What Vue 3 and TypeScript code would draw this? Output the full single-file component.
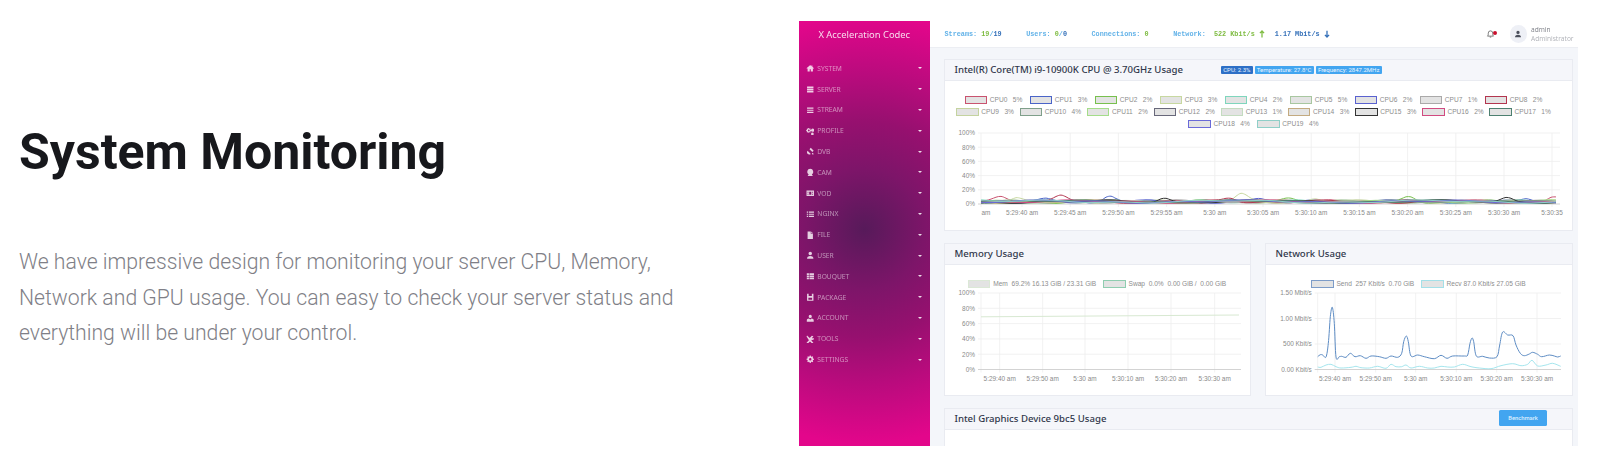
<script setup lang="ts">
type Pt = [number, number];

interface LegendItem {
  label: string;
  color: string;
}

interface Chart {
  // chart coordinates are measured on the page, the viewBox maps them back
  x: number;
  y: number;
  width: number;
  height: number;
  left: number;
  right: number;
  top: number;
  bottom: number;
  gridX: number[];
  gridY: number[];
  xLabels: { x: number; text: string }[];
  yLabels: string[];
  lines: { d: string; color: string; width: number }[];
}

interface Panel {
  title: string;
  wide: boolean;
  badges?: { text: string; dark?: boolean }[];
  button?: string;
  legend: LegendItem[][];
  chart?: Chart;
}

function smooth(pts: Pt[]): string {
  let d = `M${pts[0][0].toFixed(1)} ${pts[0][1].toFixed(1)}`;
  for (let i = 0; i < pts.length - 1; i++) {
    const p0 = pts[Math.max(i - 1, 0)];
    const p1 = pts[i];
    const p2 = pts[i + 1];
    const p3 = pts[Math.min(i + 2, pts.length - 1)];
    const c1x = p1[0] + (p2[0] - p0[0]) / 6;
    const c1y = p1[1] + (p2[1] - p0[1]) / 6;
    const c2x = p2[0] - (p3[0] - p1[0]) / 6;
    const c2y = p2[1] - (p3[1] - p1[1]) / 6;
    d += `C${c1x.toFixed(1)} ${c1y.toFixed(1)} ${c2x.toFixed(1)} ${c2y.toFixed(1)} ${p2[0].toFixed(1)} ${p2[1].toFixed(1)}`;
  }
  return d;
}

const cpuColors = [
  "#c9536f", "#4a64c8", "#78c04e", "#c7d8a0", "#7fd6bd",
  "#a8c7a0", "#5a62d0", "#aaa9a9", "#b3364f", "#c4d39f",
  "#7f9f8a", "#a4dd8a", "#68687a", "#c4dcc0", "#c3aa80",
  "#333333", "#d14a80", "#4d8070", "#6a6ad8", "#8fcfc8",
];
const cpuValues = [5, 3, 2, 3, 2, 5, 2, 1, 2, 3, 4, 2, 2, 1, 3, 3, 2, 1, 4, 4];

// where a core visibly spikes above the band: [x, height in %]
const cpuBumps: Record<number, Pt[]> = {
  0: [[1000, 6], [1552, 6]],
  8: [[1060, 7], [1229, 5]],
  3: [[1015, 7], [1240, 10], [1313, 6]],
  1: [[1045, 4], [1108, 8], [1526, 6]],
  15: [[1163, 6], [1506, 6]],
  2: [[1288, 3], [1408, 6]],
  6: [[1258, 4], [1440, 3]],
};

function cpuLine(i: number): string {
  const pts: Pt[] = [];
  for (let x = 980; x <= 1559; x += 5) {
    let v =
      3.4 +
      1.5 * Math.sin(x / (13 + i) + i * 1.7) +
      1 * Math.sin(x / (6 + i * 0.3) + i);
    for (const [bx, h] of cpuBumps[i] ?? []) {
      v += h * Math.exp(-((x - bx) ** 2) / 70);
    }
    pts.push([x, 204 - Math.max(v, 0.8) * 0.71]);
  }
  return smooth(pts);
}

const cpuLegend: LegendItem[] = cpuColors.map((color, i) => ({
  label: `CPU${i}   ${cpuValues[i]}%`,
  color,
}));

const cpuTimes = [
  "5:29:40 am", "5:29:45 am", "5:29:50 am", "5:29:55 am", "5:30 am", "5:30:05 am",
  "5:30:10 am", "5:30:15 am", "5:30:20 am", "5:30:25 am", "5:30:30 am",
];
const cpuGrid = cpuTimes.map((_, i) => 1021 + i * 48.2).concat(1551);
const shortTimes = ["5:29:40 am", "5:29:50 am", "5:30 am", "5:30:10 am", "5:30:20 am", "5:30:30 am"];
const percent = ["100%", "80%", "60%", "40%", "20%", "0%"];

function evenly(from: number, to: number, n: number): number[] {
  return Array.from({ length: n }, (_, i) => from + ((to - from) * i) / (n - 1));
}

const sendPts: Pt[] = ([
  [200, 380], [208, 374], [215, 375], [225, 381], [232, 340], [238, 260], [244, 232], [250, 280],
  [255, 381], [265, 380], [272, 379], [285, 382], [298, 370], [312, 380], [328, 377], [345, 385],
  [360, 378], [385, 380], [405, 385], [420, 378], [440, 382], [452, 370], [458, 335], [466, 318],
  [472, 335], [480, 378], [500, 375], [520, 380], [550, 386], [570, 376], [588, 385], [605, 378],
  [640, 378], [650, 375], [657, 340], [663, 324], [668, 335], [676, 378], [695, 379], [715, 384],
  [738, 380], [746, 345], [755, 306], [770, 315], [786, 317], [795, 345], [808, 370], [820, 377],
  [835, 372], [845, 367], [860, 373], [872, 380], [895, 375], [910, 378], [920, 381], [929, 378],
] as Pt[]).map(([x, y]) => [1250 + x / 3, 230 + y / 3]);

const recvPts: Pt[] = ([
  [200, 411], [210, 412], [225, 405], [240, 403], [255, 410], [270, 414], [300, 412], [315, 409],
  [330, 413], [355, 414], [380, 409], [405, 415], [420, 403], [435, 410], [452, 410], [465, 405],
  [480, 414], [505, 409], [530, 414], [550, 414], [570, 409], [590, 411], [610, 411], [635, 403],
  [660, 410], [685, 414], [720, 416], [750, 407], [785, 401], [810, 407], [830, 403], [843, 391],
  [860, 408], [885, 405], [905, 400], [929, 409],
] as Pt[]).map(([x, y]) => [1250 + x / 3, 230 + y / 3]);

const panels: Panel[] = [
  {
    title: "Intel(R) Core(TM) i9-10900K CPU @ 3.70GHz Usage",
    wide: true,
    badges: [
      { text: "CPU: 2.3%", dark: true },
      { text: "Temperature: 27.8°C" },
      { text: "Frequency: 2847.2MHz" },
    ],
    legend: [cpuLegend.slice(0, 9), cpuLegend.slice(9, 18), cpuLegend.slice(18)],
    chart: {
      x: 944,
      y: 130,
      width: 627,
      height: 100,
      left: 980,
      right: 1559,
      top: 133,
      bottom: 204,
      gridX: cpuGrid,
      gridY: evenly(133, 204, 6),
      xLabels: [
        { x: 985, text: "am" },
        ...cpuTimes.map((text, i) => ({ x: 1021 + i * 48.2, text })),
        { x: 1551, text: "5:30:35" },
      ],
      yLabels: percent,
      lines: cpuColors.map((color, i) => ({ d: cpuLine(i), color, width: 1 })),
    },
  },
  {
    title: "Memory Usage",
    wide: false,
    legend: [
      [
        { label: "Mem  69.2% 16.13 GiB / 23.31 GiB", color: "#dbe8d6" },
        { label: "Swap  0.0%  0.00 GiB /  0.00 GiB", color: "#8fcdb0" },
      ],
    ],
    chart: {
      x: 944,
      y: 290,
      width: 305,
      height: 105,
      left: 980,
      right: 1240,
      top: 293,
      bottom: 369.5,
      gridX: [998.7, 1041.7, 1084, 1127, 1170, 1213.7],
      gridY: evenly(293, 369.5, 6),
      xLabels: shortTimes.map((text, i) => ({ x: [998.7, 1041.7, 1084, 1127, 1170, 1213.7][i], text })),
      yLabels: percent,
      lines: [{ d: "M980 316.8L1238 315", color: "#d8e9d2", width: 1 }],
    },
  },
  {
    title: "Network Usage",
    wide: false,
    legend: [
      [
        { label: "Send  257 Kbit/s  0.70 GiB", color: "#7d9cc8" },
        { label: "Recv 87.0 Kbit/s 27.05 GiB", color: "#a3e0e8" },
      ],
    ],
    chart: {
      x: 1265,
      y: 290,
      width: 306,
      height: 105,
      left: 1316.7,
      right: 1560,
      top: 293,
      bottom: 369.5,
      gridX: [1334, 1374.7, 1414.7, 1455.3, 1495.7, 1536],
      gridY: evenly(293, 369.5, 4),
      xLabels: shortTimes.map((text, i) => ({ x: [1334, 1374.7, 1414.7, 1455.3, 1495.7, 1536][i], text })),
      yLabels: ["1.50 Mbit/s", "1.00 Mbit/s", "500 Kbit/s", "0.00 Kbit/s"],
      lines: [
        { d: smooth(recvPts), color: "#a5e6ee", width: 1 },
        { d: smooth(sendPts), color: "#5d8cc4", width: 1 },
      ],
    },
  },
  {
    title: "Intel Graphics Device 9bc5 Usage",
    wide: true,
    button: "Benchmark",
    legend: [
      [
        { label: "", color: "#a9dfe0" },
        { label: "", color: "#b9b4b8" },
        { label: "", color: "#dfe0a8" },
      ],
    ],
  },
];

const icons: Record<string, string> = {
  system: "M8 2 1 8l1 1 1-.8V14h4v-4h2v4h4V8.2l1 .8 1-1-3-2.6V3h-2v1.7z",
  server: "M2 3h12v3H2zM2 7h12v3H2zM2 11h12v3H2z",
  stream: "M2 3h12v2H2zM2 7h12v2H2zM2 11h12v2H2z",
  profile: "M6 3l1 .3.8-.6 1 1-.5.9.4 1 1.1.2v1.4l-1.1.2-.4 1 .5.9-1 1-.8-.6-1 .3-.3 1H4.400l-.3-1-1-.3-.8.6-1-1 .5-.9-.4-1L.3 7.200V5.800l1.100-.2.4-1-.5-.9 1-1 .8.6 1-.3.3-1h1.200zM5.300 4.900a1.600 1.600 0 1 0 0 3.200 1.600 1.600 0 0 0 0-3.200zM12.500 3a3 3 0 1 1 0 6 3 3 0 0 1 0-6zM12 10.500a2.500 2.500 0 1 1 0 5 2.500 2.500 0 0 1 0-5z",
  dvb: "M9 1.500l5.500 5.500-2.500 2.500L6.500 4zM3 7l6 6c-2 1.500-4.500 1.300-6-.2S1.500 9 3 7zM12.500 11l2 2-1.500 1.500-2-2z",
  cam: "M8 1.500a5.800 5.800 0 0 1 3 10.700L13 15H3l2-2.800A5.800 5.800 0 0 1 8 1.500z",
  vod: "M1 3h14v10H1zM3 5v2h1.500V5zM3 9v2h1.500V9zM6 5v6h4V5zM11.500 5v2H13V5zM11.500 9v2H13V9z",
  nginx: "M1.500 3h2.500v2H1.500zM1.500 7h2.500v2H1.500zM1.500 11h2.500v2H1.500zM5.500 3H15v2H5.500zM5.500 7H15v2H5.500zM5.500 11H15v2H5.500z",
  file: "M3 1h6v4h4v10H3zM10 1l3 3h-3z",
  user: "M8 1.500a3.300 3.300 0 1 1 0 6.600 3.300 3.300 0 0 1 0-6.600zM2 14.500c0-3 2-5 6-5s6 2 6 5z",
  bouquet: "M1.500 2.500h4v3h-4zM1.500 6.500h4v3h-4zM1.500 10.500h4v3h-4zM6.500 2.500H15v3H6.500zM6.500 6.500H15v3H6.500zM6.500 10.500H15v3H6.500z",
  package: "M2 1.500h12v13H2zM5 1.500v4h6v-4zM4.500 9v3.500h7V9z",
  account: "M8 1.500a3 3 0 1 1 0 6 3 3 0 0 1 0-6zM1.500 14.500v-2.500c0-2 1.500-3.500 4-3.500l2.500 2 2.500-2c2.500 0 4 1.500 4 3.500v2.500z",
  tools: "M2 1l5 4.500 4-4 3 1-2.500 2.500 1 1.500 2-1 .5 2.500-2.500 1.500-1.500-.5-1 1 4 5-2 1.500-4.500-4.500-4.500 4.500-2-2 4.500-4.500L1 3z",
  settings: "M7 1h2l.4 1.700 1.300.6 1.500-.9 1.400 1.400-.9 1.500.6 1.300 1.700.4v2l-1.700.4-.6 1.300.9 1.500-1.400 1.400-1.500-.9-1.300.6L9 15H7l-.4-1.700-1.300-.6-1.500.9-1.400-1.400.9-1.500-.6-1.300L1 9V7l1.700-.4.6-1.300-.9-1.500 1.400-1.400 1.500.9 1.300-.6zM8 5.700a2.300 2.300 0 1 0 0 4.600 2.300 2.300 0 0 0 0-4.600z",
};

const menu = Object.keys(icons);
</script>

<template>
  <div class="page">
    <section class="intro">
      <h1 class="intro__title">System Monitoring</h1>
      <p class="intro__text">
        We have impressive design for monitoring your server CPU, Memory,<br />
        Network and GPU usage. You can easy to check your server status and<br />
        everything will be under your control.
      </p>
    </section>

    <section class="shot">
      <aside class="side">
        <div class="side__brand">X Acceleration Codec</div>
        <div v-for="name in menu" :key="name" class="side__item">
          <svg class="side__icon" viewBox="0 0 16 16"><path :d="icons[name]" fill-rule="evenodd" /></svg>
          <span class="side__label">{{ name }}</span>
          <span class="side__caret"></span>
        </div>
      </aside>

      <div class="main">
        <header class="top">
          <div class="stats">
            <span class="stat">Streams: <b class="g">19</b>/<b class="b">19</b></span>
            <span class="stat">Users: <b class="g">0</b>/<b class="b">0</b></span>
            <span class="stat">Connections: <b class="g">0</b></span>
            <span class="stat stat--net">
              Network:&nbsp;&nbsp;<b class="g">522 Kbit/s</b>
              <svg class="arrow arrow--up" viewBox="0 0 8 10"><path d="M4 9.500V1M1.200 3.800 4 1l2.800 2.800" /></svg>
              <b class="b net-down">1.17 Mbit/s</b>
              <svg class="arrow arrow--down" viewBox="0 0 8 10"><path d="M4 .5V9M1.200 6.200 4 9l2.800-2.800" /></svg>
            </span>
          </div>
          <div class="bell">
            <svg viewBox="0 0 12 12"><path d="M2 9.500c1-1 1-2 1-4a3 3 0 0 1 6 0c0 2 0 3 1 4zM5 10.800h2" /></svg>
            <i class="bell__dot"></i>
          </div>
          <div class="avatar">
            <svg viewBox="0 0 16 16"><path :d="icons.user" /></svg>
          </div>
          <div class="who">
            <div class="who__name">admin</div>
            <div class="who__role">Administrator</div>
          </div>
        </header>

        <div class="content">
          <article
            v-for="panel in panels"
            :key="panel.title"
            class="panel"
            :class="{ 'panel--wide': panel.wide }"
          >
            <div class="panel__head">
              <h2 class="panel__title">{{ panel.title }}</h2>
              <div v-if="panel.badges" class="badges">
                <span
                  v-for="badge in panel.badges"
                  :key="badge.text"
                  class="badge"
                  :class="{ 'badge--dark': badge.dark }"
                >{{ badge.text }}</span>
              </div>
              <button v-if="panel.button" type="button" class="bench">{{ panel.button }}</button>
            </div>
            <div class="panel__body">
              <div
                v-for="(row, r) in panel.legend"
                :key="r"
                class="legend"
                :class="{ 'legend--bare': !panel.chart, 'legend--tight': panel.wide && r === 1 }"
              >
                <span v-for="item in row" :key="item.color" class="legend__item">
                  <i class="legend__box" :style="{ borderColor: item.color }"></i>
                  <span v-if="item.label">{{ item.label }}</span>
                </span>
              </div>
              <svg
                v-if="panel.chart"
                class="chart"
                :width="panel.chart.width"
                :height="panel.chart.height"
                :viewBox="`${panel.chart.x} ${panel.chart.y} ${panel.chart.width} ${panel.chart.height}`"
              >
                <line
                  v-for="gx in panel.chart.gridX"
                  :key="'x' + gx"
                  :x1="gx"
                  :x2="gx"
                  :y1="panel.chart.top"
                  :y2="panel.chart.bottom + 3"
                  class="grid"
                />
                <line
                  :x1="panel.chart.left"
                  :x2="panel.chart.left"
                  :y1="panel.chart.top"
                  :y2="panel.chart.bottom + 3"
                  class="grid"
                />
                <line
                  v-for="(gy, i) in panel.chart.gridY"
                  :key="'y' + gy"
                  :x1="panel.chart.left - 3"
                  :x2="panel.chart.right"
                  :y1="gy"
                  :y2="gy"
                  class="grid"
                  :class="{ 'grid--zero': i === panel.chart.gridY.length - 1 }"
                />
                <path
                  v-for="(line, i) in panel.chart.lines"
                  :key="i"
                  :d="line.d"
                  fill="none"
                  :stroke="line.color"
                  :stroke-width="line.width"
                />
                <text
                  v-for="(label, i) in panel.chart.yLabels"
                  :key="label"
                  class="tick"
                  text-anchor="end"
                  :x="panel.chart.left - 6"
                  :y="panel.chart.gridY[i] + 2.3"
                >{{ label }}</text>
                <text
                  v-for="label in panel.chart.xLabels"
                  :key="label.text"
                  class="tick"
                  text-anchor="middle"
                  :x="label.x"
                  :y="panel.chart.bottom + 11"
                >{{ label.text }}</text>
              </svg>
            </div>
          </article>
        </div>
      </div>
    </section>
  </div>
</template>

<style scoped>
.page {
  display: flex;
  width: 1597px;
  height: 467px;
  overflow: hidden;
  background: #fff;
}

.intro {
  width: 799px;
  flex: none;
  box-sizing: border-box;
  padding: 120px 0 0 19px;
  font-family: Roboto, sans-serif;
}

.intro__title {
  margin: 0;
  font-size: 50px;
  line-height: 65px;
  font-weight: 700;
  color: #17181c;
}

.intro__text {
  margin: 59px 0 0;
  font-size: 21.2px;
  line-height: 35.5px;
  font-weight: 300;
  color: #7f7f87;
}

.shot {
  display: flex;
  width: 779px;
  height: 425px;
  margin-top: 21px;
  overflow: hidden;
  filter: blur(0.45px);
}

.side {
  flex: none;
  width: 130.5px;
  background: radial-gradient(circle 215px at 50% 49%, #571a5a 0%, #7d1569 28%, #96106f 50%, #b90b7d 72%, #e3068b 100%);
  font-family: "Noto Sans", sans-serif;
}

.side__brand {
  height: 37px;
  line-height: 27px;
  text-align: center;
  font-size: 9.4px;
  color: rgba(255, 255, 255, 0.85);
}

.side__item {
  display: flex;
  align-items: center;
  height: 20.8px;
  padding: 0 8px 0 6.500px;
  color: rgba(255, 255, 255, 0.52);
}

.side__icon {
  flex: none;
  width: 8.5px;
  height: 8.5px;
  fill: rgba(255, 255, 255, 0.8);
}

.side__label {
  margin-left: 3.300px;
  font-size: 6.700px;
  text-transform: uppercase;
}

.side__caret {
  margin-left: auto;
  border: 2px solid transparent;
  border-top-color: rgba(255, 255, 255, 0.85);
  border-bottom: 0;
}

.main {
  flex: 1;
  min-width: 0;
  display: flex;
  flex-direction: column;
}

.top {
  flex: none;
  display: flex;
  align-items: center;
  height: 27px;
  padding-left: 15px;
  background: #fff;
  border-bottom: 1px solid #eceef3;
  box-sizing: border-box;
}

.stats {
  display: flex;
  align-items: center;
  gap: 24.5px;
  font-family: "Liberation Mono", monospace;
  font-size: 6.8px;
  font-weight: 700;
  color: #62b2e8;
  white-space: nowrap;
}

.stat--net {
  display: flex;
  align-items: center;
}

.stat--net .g {
  white-space: pre;
}

.stats b {
  font-weight: 700;
}

.g {
  color: #7fbc42;
}

.b {
  color: #336fb8;
}

.net-down {
  margin-left: 10px;
}

.arrow {
  width: 6px;
  height: 8px;
  margin-left: 4px;
  fill: none;
  stroke-width: 1.7;
}

.arrow--up {
  stroke: #7fbc42;
}

.arrow--down {
  stroke: #336fb8;
}

.bell {
  position: relative;
  width: 12px;
  height: 12px;
  margin-left: auto;
}

.bell svg {
  display: block;
  width: 9px;
  height: 11px;
  fill: none;
  stroke: #444;
  stroke-width: 0.9;
}

.bell__dot {
  position: absolute;
  top: 3px;
  left: 7px;
  width: 4px;
  height: 4px;
  border-radius: 50%;
  background: #c8102e;
}

.avatar {
  display: flex;
  align-items: center;
  justify-content: center;
  width: 17.5px;
  height: 17.5px;
  margin-left: 12px;
  border-radius: 50%;
  background: #eef0f6;
}

.avatar svg {
  width: 8px;
  height: 8px;
  fill: #4b4f5c;
}

.who {
  width: 47px;
  margin-left: 4px;
  font-family: "Open Sans", sans-serif;
  font-size: 6.6px;
  line-height: 9px;
}

.who__name {
  color: #7e8088;
}

.who__role {
  color: #b0b2b8;
}

.content {
  flex: 1;
  display: grid;
  grid-template-columns: 307px 308px;
  grid-template-rows: 172px 153px 60px;
  gap: 12px 14px;
  padding: 11px 6px 0 14px;
  background: #f4f6fa;
  overflow: hidden;
}

.panel {
  display: flex;
  flex-direction: column;
  min-width: 0;
  background: #fff;
  border: 1px solid #e9ebf1;
}

.panel--wide {
  grid-column: 1 / span 2;
}

.panel__head {
  flex: none;
  display: flex;
  align-items: center;
  box-sizing: border-box;
  height: 21px;
  padding: 0 24.5px 1.5px 10px;
  background: #f5f6fa;
  border-bottom: 1px solid #e9ebf1;
}

.panel__title {
  margin: 0;
  font-family: "Noto Sans", sans-serif;
  font-size: 9.6px;
  font-weight: 500;
  color: #30364a;
  white-space: nowrap;
}

.badges {
  display: flex;
  gap: 2px;
  margin-left: 38px;
  margin-top: 1px;
}

.badge {
  height: 8px;
  padding: 0 2.2px;
  border-radius: 1px;
  background: #42a5f0;
  color: #eaf5ff;
  font-family: Roboto, sans-serif;
  font-size: 6px;
  font-weight: 400;
  line-height: 8px;
  white-space: nowrap;
}

.badge--dark {
  background: #2d6fc6;
}

.bench {
  margin-left: auto;
  width: 48px;
  height: 16px;
  padding: 0;
  border: 0;
  border-radius: 1.5px;
  background: #42a5f0;
  color: #dff0ff;
  font-family: Roboto, sans-serif;
  font-size: 5.8px;
  font-weight: 500;
}

.panel__body {
  flex: 1;
  min-height: 0;
  padding-top: 13px;
  overflow: hidden;
}

.legend {
  display: flex;
  justify-content: center;
  gap: 7.2px;
  height: 12px;
  font-family: "Liberation Sans", sans-serif;
  font-size: 6.6px;
  line-height: 12px;
  color: #8d8d8d;
  white-space: pre;
}

.panel--wide .legend {
  padding-right: 9px;
}

.legend--tight {
  gap: 5.7px;
}

.panel--wide .legend--bare {
  gap: 44px;
  margin-top: 2px;
  padding-right: 64px;
}

.legend__item {
  display: flex;
  align-items: center;
  gap: 2.7px;
}

.legend__box {
  box-sizing: border-box;
  width: 22.5px;
  height: 7.5px;
  background: #e3e3e3;
  border: 0.8px solid #999;
}

.chart {
  display: block;
}

.grid {
  stroke: #eeeeee;
  stroke-width: 0.8;
}

.grid--zero {
  stroke: #c8c8c8;
}

.tick {
  font-family: "Liberation Sans", sans-serif;
  font-size: 6.45px;
  fill: #8a8a8a;
}
</style>
